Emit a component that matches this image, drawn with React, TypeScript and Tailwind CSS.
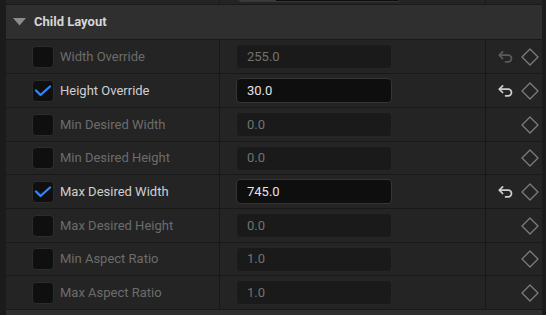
import React from 'react';

type Row = {
  label: string;
  value: string;
  checked: boolean;
  reset: 'dim' | 'on' | null;
  h: number;
};

const rows: Row[] = [
  { label: 'Width Override', value: '255.0', checked: false, reset: 'dim', h: 34 },
  { label: 'Height Override', value: '30.0', checked: true, reset: 'on', h: 34 },
  { label: 'Min Desired Width', value: '0.0', checked: false, reset: null, h: 34 },
  { label: 'Min Desired Height', value: '0.0', checked: false, reset: null, h: 33 },
  { label: 'Max Desired Width', value: '745.0', checked: true, reset: 'on', h: 34 },
  { label: 'Max Desired Height', value: '0.0', checked: false, reset: null, h: 34 },
  { label: 'Min Aspect Ratio', value: '1.0', checked: false, reset: null, h: 33 },
  { label: 'Max Aspect Ratio', value: '1.0', checked: false, reset: null, h: 34 },
];

const ResetIcon = ({ color }: { color: string }) => (
  <svg width="15" height="12" viewBox="0 0 15 12" fill="none">
    <path d="M4.6 0.9 1.3 4.2 4.6 7.5" stroke={color} strokeWidth="1.7" strokeLinecap="round" strokeLinejoin="round" />
    <path d="M1.8 4.2h8.4a3.3 3.3 0 0 1 0 6.6H7.6" stroke={color} strokeWidth="1.7" strokeLinecap="round" />
  </svg>
);

const Diamond = () => (
  <svg width="18" height="18" viewBox="0 0 18 18" fill="none">
    <path d="M9 1 17 9 9 17 1 9Z" stroke="#7c7c7c" strokeWidth="1.3" strokeLinejoin="round" />
  </svg>
);

const Check = () => (
  <svg width="18" height="12" viewBox="0 0 18 12" fill="none">
    <path d="M2 5.5 6.5 10 16 1.5" stroke="#2f86ff" strokeWidth="2.3" strokeLinecap="round" strokeLinejoin="round" />
  </svg>
);

function PropRow({ row }: { row: Row }) {
  return (
    <div className="flex border-t border-[#191919]" style={{ height: row.h }}>
      <div className="flex w-[214px] items-center border-r border-[#191919] pl-[26px]">
        <div className="flex h-[22px] w-[22px] items-center justify-center rounded-[4px] border border-[#2c2c2c] bg-[#0f0f0f]">
          {row.checked && <Check />}
        </div>
        <span className={`ml-[6px] text-[13px] ${row.checked ? 'text-[#cfcfcf]' : 'text-[#6c6c6c]'}`}>
          {row.label}
        </span>
      </div>
      <div className="flex w-[266px] items-center border-r border-[#191919] pl-[16px]">
        <div
          className={`flex h-[25px] w-[156px] items-center rounded-[4px] border pl-[10px] text-[13px] ${
            row.checked
              ? 'border-[#363636] bg-[#0e0e0e] text-[#e4e4e4]'
              : 'border-[#262626] bg-[#1a1a1a] text-[#727272]'
          }`}
        >
          {row.value}
        </div>
      </div>
      <div className="flex flex-1 items-center justify-end gap-[8px] pr-[3px]">
        {row.reset && <ResetIcon color={row.reset === 'on' ? '#cfcfcf' : '#5c5c5c'} />}
        <Diamond />
      </div>
    </div>
  );
}

export default function App() {
  return (
    <div
      className="flex h-[315px] w-[546px] overflow-hidden bg-[#1b1b1b]"
      style={{ fontFamily: 'Roboto, "Noto Sans", sans-serif' }}
    >
      <div className="w-[6px] bg-[#1b1b1b]" />
      <div className="flex w-[536px] flex-col bg-[#242424]">
        {/* previous row tail */}
        <div className="flex h-[5px] border-b border-[#191919]">
          <div className="w-[214px] border-r border-[#191919]" />
          <div className="w-[266px] border-r border-[#191919] pl-[16px]">
            <div className="-mt-[20px] h-[22px] w-[166px] overflow-hidden rounded-[5px] border border-[#363636] bg-[#0e0e0e]">
              <div className="mt-[16px] h-[6px] w-[39px] rounded-br-[4px] bg-[#3a3a3a]" />
            </div>
          </div>
        </div>
        {/* section header */}
        <div className="flex h-[34px] items-center bg-[#2f2f2f] pl-[7px]">
          <svg width="13" height="8" viewBox="0 0 13 8">
            <path d="M0 0h13L6.5 7.5Z" fill="#8c8c8c" />
          </svg>
          <span className="ml-[8px] text-[13px] font-bold text-[#d6d6d6]">Child Layout</span>
        </div>
        {rows.map((r) => (
          <PropRow key={r.label} row={r} />
        ))}
        <div className="flex-1 border-t border-[#191919] bg-[#2e2e2e]" />
      </div>
      <div className="flex-1 bg-[#1b1b1b]" />
    </div>
  );
}
